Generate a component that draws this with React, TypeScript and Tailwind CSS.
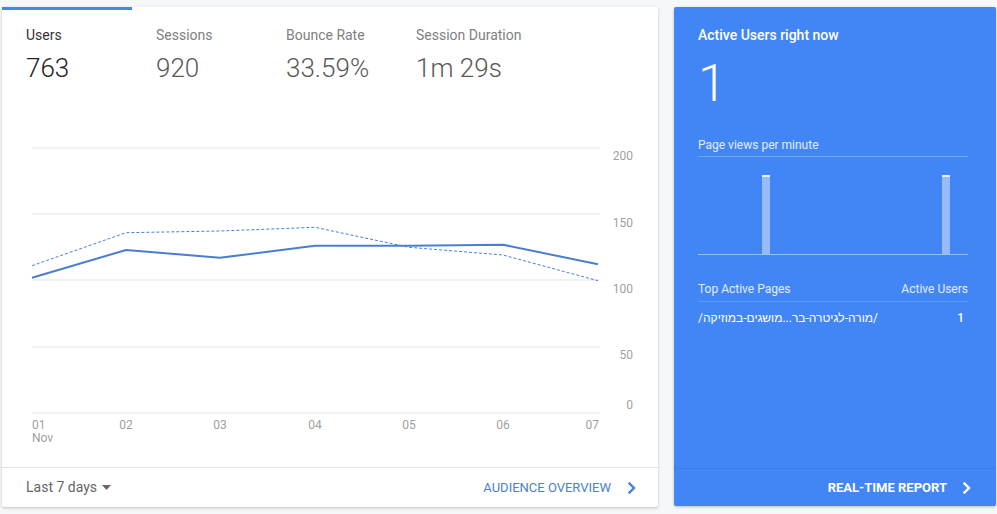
import React from 'react';

const TABS = [
  { label: 'Users', value: '763', active: true },
  { label: 'Sessions', value: '920' },
  { label: 'Bounce Rate', value: '33.59%' },
  { label: 'Session Duration', value: '1m 29s' },
];

// x positions of the 7 days inside the chart svg
const XS = [30, 124, 218, 313, 407, 501, 596];
const USERS = [137.7, 110, 117.7, 105.7, 105.7, 104.7, 124.3];
const PREV = [125.7, 92.7, 91, 87.3, 107.3, 115, 140.7];
const GRID = [8, 74, 140, 207, 273];
const Y_LABELS = [
  { t: '200', y: 19.5 },
  { t: '150', y: 86.5 },
  { t: '100', y: 152.5 },
  { t: '50', y: 218.5 },
  { t: '0', y: 268.5 },
];

const pts = (ys: number[]) => ys.map((y, i) => `${XS[i]},${y}`).join(' ');

function Chevron({ className }: { className?: string }) {
  return (
    <svg viewBox="0 0 8 12" className={className} fill="none" stroke="currentColor" strokeWidth={2.4}>
      <path d="M1.5 1.5 6 6l-4.5 4.5" strokeLinecap="square" />
    </svg>
  );
}

function LineChart() {
  return (
    <svg width={656} height={305} className="block">
      {GRID.map((y) => (
        <line key={y} x1={30} x2={598} y1={y} y2={y} stroke="#e3e3e3" strokeWidth={1} />
      ))}
      {Y_LABELS.map((l) => (
        <text key={l.t} x={631} y={l.y} textAnchor="end" fontSize={12} fill="#a0a0a0">
          {l.t}
        </text>
      ))}
      {['01', '02', '03', '04', '05', '06', '07'].map((d, i) => (
        <text
          key={d}
          x={i === 6 ? 597 : XS[i]}
          y={288.5}
          textAnchor={i === 0 ? 'start' : i === 6 ? 'end' : 'middle'}
          fontSize={12}
          fill="#a0a0a0"
        >
          {d}
        </text>
      ))}
      <text x={30} y={301.5} fontSize={12} fill="#a0a0a0">Nov</text>
      <polyline points={pts(PREV)} fill="none" stroke="#4a7fcf" strokeWidth={1} strokeDasharray="3 2" />
      <polyline points={pts(USERS)} fill="none" stroke="#4a7fcf" strokeWidth={2} strokeLinejoin="round" />
    </svg>
  );
}

function BarChart() {
  return (
    <svg width={270} height={98} className="block">
      {[64, 244].map((x) => (
        <g key={x}>
          <rect x={x} y={21} width={8} height={76} fill="rgba(255,255,255,0.45)" />
          <rect x={x} y={18} width={8} height={2.5} fill="rgba(235,245,255,0.95)" />
        </g>
      ))}
      <line x1={0} x2={270} y1={97.5} y2={97.5} stroke="rgba(255,255,255,0.45)" strokeWidth={1} />
    </svg>
  );
}

export default function App() {
  return (
    <div className="min-h-[514px] w-[997px] bg-[#f6f7f9] font-['Roboto','Liberation_Sans',sans-serif]">
      <div className="flex gap-[16px] pl-[2px] pt-[7px]">
        {/* Audience card */}
        <div className="flex h-[500px] w-[656px] flex-col rounded-[2px] bg-white shadow-[0_1px_3px_rgba(0,0,0,0.22)]">
          <div className="flex">
            {TABS.map((t) => (
              <div
                key={t.label}
                className={`w-[130px] border-t-[3px] pl-[24px] pt-[15px] ${t.active ? 'border-[#4285f4]' : 'border-transparent'}`}
              >
                <div className={`text-[14px] leading-[20px] ${t.active ? 'text-[#333]' : 'text-[#808080]'}`}>{t.label}</div>
                <div className={`mt-[7px] text-[26px] font-light leading-[32px] ${t.active ? 'text-[#222]' : 'text-[#5a5a5a]'}`}>
                  {t.value}
                </div>
              </div>
            ))}
          </div>
          <div className="mt-[56px]">
            <LineChart />
          </div>
          <div className="flex-1" />
          <div className="flex h-[40px] items-center justify-between border-t border-[#e3e3e3] pl-[24px] pr-[22px]">
            <div className="flex items-center gap-[5px] text-[14px] text-[#666]">
              Last 7 days
              <svg width={9} height={5} viewBox="0 0 9 5">
                <path d="M0 0h9L4.5 5z" fill="#666" />
              </svg>
            </div>
            <div className="flex items-center gap-[17px] text-[13px] text-[#4a80cf]">
              AUDIENCE OVERVIEW
              <Chevron className="h-[12px] w-[8px]" />
            </div>
          </div>
        </div>

        {/* Realtime card */}
        <div className="flex h-[499px] w-[322px] flex-col rounded-[2px] bg-[#4285f4] text-white shadow-[0_1px_3px_rgba(0,0,0,0.25)]">
          <div className="pl-[24px] pr-[28px]">
            <div className="pt-[18px] text-[14px] font-medium leading-[20px]">Active Users right now</div>
            <div className="mt-[13px] text-[52px] font-light leading-none">1</div>
            <div className="mt-[27px] border-b border-white/25 pb-[3px] text-[12px] leading-[16px] text-white/85">
              Page views per minute
            </div>
            <BarChart />
            <div className="mt-[26px] flex justify-between border-b border-white/15 pb-[4px] text-[12px] leading-[16px] text-white/85">
              <span>Top Active Pages</span>
              <span>Active Users</span>
            </div>
            <div className="flex justify-between pt-[8px] text-[12px] leading-[16px]">
              <span>/מורה-לגיטרה-בר...מושגים-במוזיקה/</span>
              <span className="pr-[4px] font-medium">1</span>
            </div>
          </div>
          <div className="flex-1" />
          <div className="flex h-[38px] items-center justify-end gap-[16px] border-t border-black/5 pr-[25px] text-[13px] font-bold">
            REAL-TIME REPORT
            <Chevron className="h-[12px] w-[8px]" />
          </div>
        </div>
      </div>
    </div>
  );
}
